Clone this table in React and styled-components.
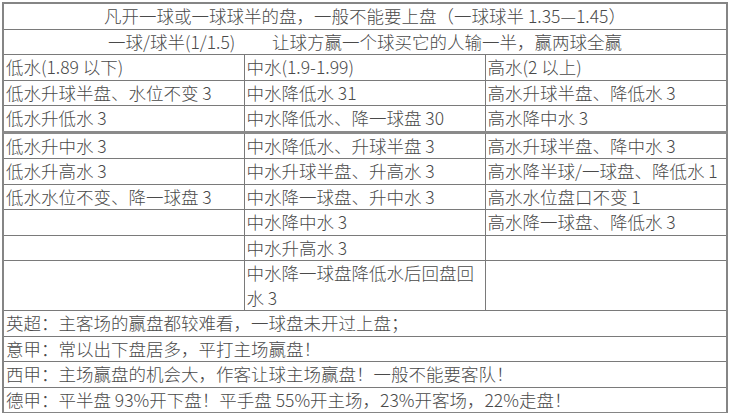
import React from "react";
import styled, { createGlobalStyle } from "styled-components";

const GlobalStyle = createGlobalStyle`
  html, body {
    margin: 0;
    padding: 0;
    background: #ffffff;
  }
`;

const Page = styled.div`
  padding: 2px 3px 0 2px;
`;

const Table = styled.table`
  width: 724px;
  border-collapse: collapse;
  table-layout: fixed;
  border: 2px solid #858585;
  font-family: "Noto Sans CJK SC", sans-serif;
  font-weight: 300;
  font-size: 17.5px;
  color: #4a4a4a;
`;

const Cell = styled.td`
  border: 1px solid #7a7a7a;
  border-top: ${({ $thick }) => ($thick ? "3px solid #8a8a8a" : "1px solid #7a7a7a")};
  padding: 0 2px;
  line-height: 24.5px;
  text-align: ${({ $center }) => ($center ? "center" : "left")};
  vertical-align: middle;
  white-space: ${({ $wrap }) => ($wrap ? "normal" : "nowrap")};
  overflow: hidden;
`;

const Gap = styled.span`
  margin-left: 2.1em;
`;

const rows = [
  ["低水(1.89 以下)", "中水(1.9-1.99)", "高水(2 以上)"],
  ["低水升球半盘、水位不变 3", "中水降低水 31", "高水升球半盘、降低水 3"],
  ["低水升低水 3", "中水降低水、降一球盘 30", "高水降中水 3"],
  ["低水升中水 3", "中水降低水、升球半盘 3", "高水升球半盘、降中水 3"],
  ["低水升高水 3", "中水升球半盘、升高水 3", "高水降半球/一球盘、降低水 1"],
  ["低水水位不变、降一球盘 3", "中水降一球盘、升中水 3", "高水水位盘口不变 1"],
  ["", "中水降中水 3", "高水降一球盘、降低水 3"],
  ["", "中水升高水 3", ""],
  ["", "中水降一球盘降低水后回盘回水 3", ""],
];

const notes = [
  "英超：主客场的赢盘都较难看，一球盘未开过上盘；",
  "意甲：常以出下盘居多，平打主场赢盘！",
  "西甲：主场赢盘的机会大，作客让球主场赢盘！一般不能要客队！",
  "德甲：平半盘 93%开下盘！平手盘 55%开主场，23%开客场，22%走盘！",
];

export default function App() {
  return (
    <>
      <GlobalStyle />
      <Page>
        <Table>
          <colgroup>
            <col style={{ width: "241px" }} />
            <col style={{ width: "241px" }} />
            <col style={{ width: "242px" }} />
          </colgroup>
          <tbody>
            <tr>
              <Cell colSpan={3} $center>
                凡开一球或一球球半的盘，一般不能要上盘（一球球半 1.35—1.45）
              </Cell>
            </tr>
            <tr>
              <Cell colSpan={3} $center>
                一球/球半(1/1.5)
                <Gap>让球方赢一个球买它的人输一半，赢两球全赢</Gap>
              </Cell>
            </tr>
            {rows.map((row, i) => (
              <tr key={i}>
                {row.map((text, j) => (
                  <Cell key={j} $thick={i === 3} $wrap>
                    {text || "\u00a0"}
                  </Cell>
                ))}
              </tr>
            ))}
            {notes.map((text) => (
              <tr key={text}>
                <Cell colSpan={3}>{text}</Cell>
              </tr>
            ))}
          </tbody>
        </Table>
      </Page>
    </>
  );
}
